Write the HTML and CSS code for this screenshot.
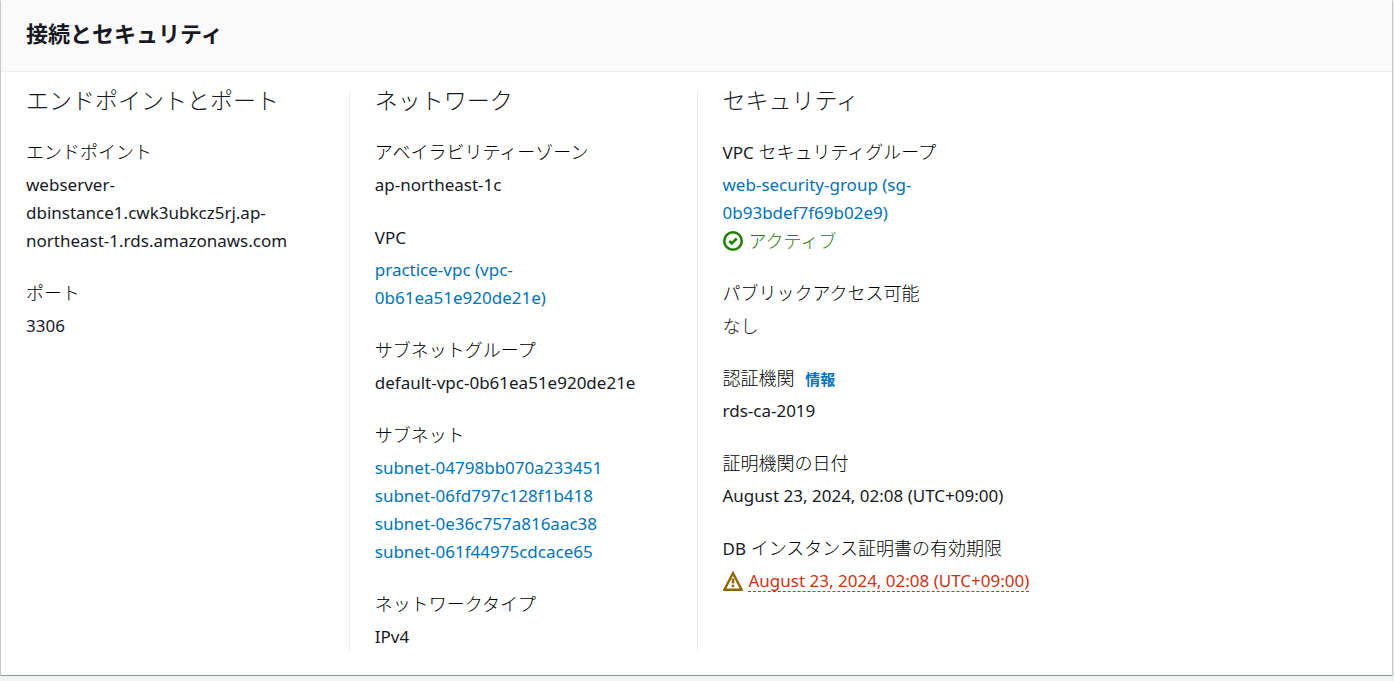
FILE: index.html
```html
<!DOCTYPE html>
<html lang="ja">
<head>
<meta charset="utf-8">
<meta name="viewport" content="width=device-width, initial-scale=1">
<title>接続とセキュリティ</title>
<link rel="stylesheet" href="styles.css">
</head>
<body>
<section class="panel">
  <header class="panel-header">
    <h2 class="panel-title">接続とセキュリティ</h2>
  </header>
  <div class="columns">
    <div class="column">
      <h3 class="column-title">エンドポイントとポート</h3>
      <dl class="fields">
        <div class="field">
          <dt>エンドポイント</dt>
          <dd>webserver-dbinstance1.cwk3ubkcz5rj.ap-northeast-1.rds.amazonaws.com</dd>
        </div>
        <div class="field">
          <dt>ポート</dt>
          <dd>3306</dd>
        </div>
      </dl>
    </div>
    <div class="column">
      <h3 class="column-title">ネットワーク</h3>
      <dl class="fields">
        <div class="field">
          <dt>アベイラビリティーゾーン</dt>
          <dd>ap-northeast-1c</dd>
        </div>
        <div class="field">
          <dt><span class="latin">VPC</span></dt>
          <dd><a class="link" href="#">practice-vpc (vpc-0b61ea51e920de21e)</a></dd>
        </div>
        <div class="field">
          <dt>サブネットグループ</dt>
          <dd>default-vpc-0b61ea51e920de21e</dd>
        </div>
        <div class="field">
          <dt>サブネット</dt>
          <dd><a class="link" href="#">subnet-04798bb070a233451</a></dd>
          <dd><a class="link" href="#">subnet-06fd797c128f1b418</a></dd>
          <dd><a class="link" href="#">subnet-0e36c757a816aac38</a></dd>
          <dd><a class="link" href="#">subnet-061f44975cdcace65</a></dd>
        </div>
        <div class="field">
          <dt>ネットワークタイプ</dt>
          <dd>IPv4</dd>
        </div>
      </dl>
    </div>
    <div class="column">
      <h3 class="column-title">セキュリティ</h3>
      <dl class="fields">
        <div class="field">
          <dt><span class="latin">VPC</span> セキュリティグループ</dt>
          <dd><a class="link" href="#">web-security-group (sg-0b93bdef7f69b02e9)</a></dd>
          <dd class="status status-ok">
            <svg class="icon" viewBox="0 0 16 16" aria-hidden="true"><circle cx="8" cy="8" r="7"/><path d="M5 8l2 2 4-4"/></svg>
            <span class="japanese">アクティブ</span>
          </dd>
        </div>
        <div class="field">
          <dt>パブリックアクセス可能</dt>
          <dd class="japanese">なし</dd>
        </div>
        <div class="field">
          <dt>認証機関 <a class="info" href="#">情報</a></dt>
          <dd>rds-ca-2019</dd>
        </div>
        <div class="field">
          <dt>証明機関の日付</dt>
          <dd>August 23, 2024, 02:08 (UTC+09:00)</dd>
        </div>
        <div class="field">
          <dt><span class="latin">DB</span> インスタンス証明書の有効期限</dt>
          <dd class="status status-warning">
            <svg class="icon" viewBox="0 0 16 16" aria-hidden="true"><path d="M8 1.8l6.9 13.2H1.1z"/><path d="M8 6v4M8 11v2"/></svg>
            <span class="expiry">August 23, 2024, 02:08 (UTC+09:00)</span>
          </dd>
        </div>
      </dl>
    </div>
  </div>
</section>
</body>
</html>
```
FILE: styles.css
```css
* {
  box-sizing: border-box;
}

body {
  margin: 0;
  background: #f2f3f3;
  color: #16191f;
  font-family: "Noto Sans", "Noto Sans CJK JP", sans-serif;
  font-size: 17px;
  line-height: 28px;
}

.panel {
  margin: 0 2px 0 1px;
  background: #fff;
  border-bottom: 1px solid #879596;
  box-shadow: 0 1px 1px 0 rgba(0, 28, 36, 0.3),
    1px 1px 1px 0 rgba(0, 28, 36, 0.15),
    -1px 1px 1px 0 rgba(0, 28, 36, 0.15);
}

.panel-header {
  padding: 16px 25px 20px;
  background: #fafafa;
  border-bottom: 1px solid #eaeded;
}

.panel-title {
  margin: 0;
  font-size: 22px;
  line-height: 35px;
  font-weight: 700;
}

.columns {
  display: grid;
  grid-template-columns: repeat(4, minmax(0, 1fr));
  padding: 18px 0 24px;
}

.column {
  padding: 0 25px;
}

.column + .column {
  border-left: 1px solid #eaeded;
}

.column:last-child {
  padding-right: 0;
}

.column-title {
  margin: 0 0 29px;
  font-size: 23px;
  line-height: 20px;
  font-weight: 300;
}

.fields {
  display: grid;
  gap: 25px;
  margin: 0;
}

dt {
  margin-bottom: 6px;
  color: #000;
  font-size: 18px;
  line-height: 26px;
  font-weight: 300;
}

dd {
  margin: 0;
}

.latin {
  color: #16191f;
  font-size: 17px;
  line-height: 20px;
  font-weight: 400;
}

.japanese {
  font-size: 18px;
  font-weight: 300;
}

.link,
.info {
  color: #0073bb;
  text-decoration: none;
}

.link:hover,
.info:hover {
  text-decoration: underline;
}

.info {
  margin-left: 6px;
  font-size: 15px;
  line-height: 20px;
  font-weight: 700;
}

.status {
  display: flex;
  align-items: center;
  gap: 6px;
  white-space: nowrap;
}

.icon {
  flex: none;
  width: 20px;
  height: 20px;
  fill: none;
  stroke: currentColor;
  stroke-width: 2;
}

.status-ok {
  color: #1d8102;
}

.status-warning {
  color: #906806;
}

.expiry {
  color: #d13212;
  text-decoration: underline dashed 1px;
  text-underline-offset: 4px;
  text-decoration-skip-ink: none;
}
```
